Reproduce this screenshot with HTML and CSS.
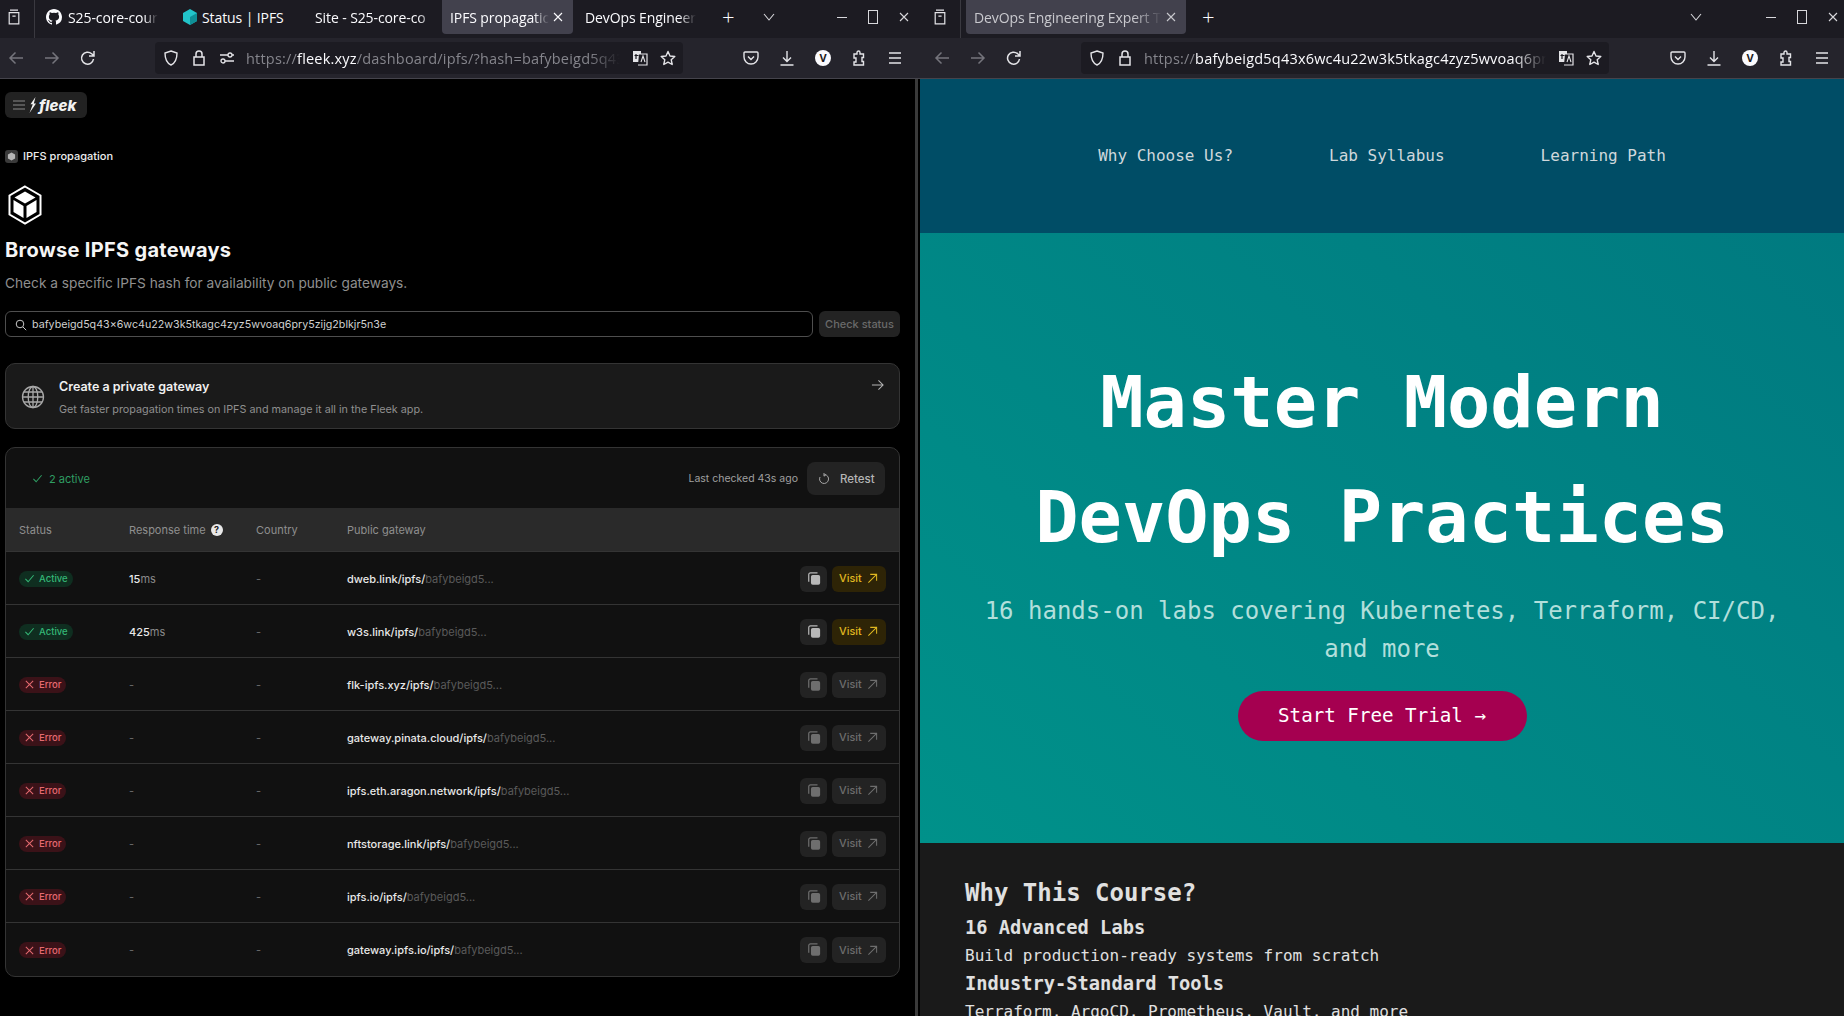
FILE: index.html
```html
<!DOCTYPE html>
<html lang="en">
<head>
    <meta charset="UTF-8">
    <title>IPFS propagation</title>
    <link rel="stylesheet" href="styles.css">
</head>
<body>
    <svg class="defs" width="0" height="0">
        <symbol id="i-tabs" viewBox="0 0 16 20"><path d="M3 1.500h10M2 4.500h12v14H2zM6 9h4" fill="none" stroke="currentColor" stroke-width="1.500"/></symbol>
        <symbol id="i-back" viewBox="0 0 16 16"><path d="M15 8H2M7.500 2.500L2 8l5.500 5.500" fill="none" stroke="currentColor" stroke-width="1.500"/></symbol>
        <symbol id="i-forward" viewBox="0 0 16 16"><path d="M1 8h13M8.500 2.500L14 8l-5.500 5.500" fill="none" stroke="currentColor" stroke-width="1.500"/></symbol>
        <symbol id="i-reload" viewBox="0 0 16 16"><path d="M13.500 9a6 6 0 1 1-1.800-5.200L14 6M14 1v5H9" fill="none" stroke="currentColor" stroke-width="1.500"/></symbol>
        <symbol id="i-shield" viewBox="0 0 16 16"><path d="M8 1l6 2c0 6-1.500 10-6 12C3.500 13 2 9 2 3z" fill="none" stroke="currentColor" stroke-width="1.400"/></symbol>
        <symbol id="i-lock" viewBox="0 0 16 16"><path d="M3 7h10v8H3zM5 7V4a3 3 0 0 1 6 0v3" fill="none" stroke="currentColor" stroke-width="1.500"/></symbol>
        <symbol id="i-perm" viewBox="0 0 16 16"><circle cx="4" cy="11" r="2" fill="none" stroke="currentColor" stroke-width="1.300"/><circle cx="11" cy="5" r="2" fill="none" stroke="currentColor" stroke-width="1.300"/><path d="M1 5h8M13 5h2M6 11h9" stroke="currentColor" stroke-width="1.300"/></symbol>
        <symbol id="i-translate" viewBox="0 0 16 16"><path d="M1 1h8v11H1z" fill="currentColor"/><path d="M7 4h8v11H6" fill="#1c1b22" stroke="currentColor" stroke-width="1.200"/><path d="M4 4v5M2.500 5.500h4" stroke="#1c1b22" stroke-width="1.200"/><path d="M9 12l2-6 2 6" fill="none" stroke="currentColor" stroke-width="1.100"/></symbol>
        <symbol id="i-star" viewBox="0 0 16 16"><path d="M8 1.500l2 4.500 4.800.500-3.600 3.200 1 4.800L8 12.100l-4.200 2.400 1-4.800L1.200 6.500 6 6z" fill="none" stroke="currentColor" stroke-width="1.400" stroke-linejoin="round"/></symbol>
        <symbol id="i-pocket" viewBox="0 0 16 16"><path d="M2 2h12a1 1 0 0 1 1 1v4a7 7 0 0 1-14 0V3a1 1 0 0 1 1-1z" fill="none" stroke="currentColor" stroke-width="1.400"/><path d="M5 6.500l3 3 3-3" fill="none" stroke="currentColor" stroke-width="1.400"/></symbol>
        <symbol id="i-download" viewBox="0 0 16 16"><path d="M8 1v10M4 7.500L8 11.500l4-4M1.500 15h13" fill="none" stroke="currentColor" stroke-width="1.400"/></symbol>
        <symbol id="i-ext" viewBox="0 0 16 16"><path d="M6 4V2.500a1.500 1.500 0 0 1 3 0V4h3.500v3.500H11v4h1.500V15H3v-3h2V8H3V4z" fill="none" stroke="currentColor" stroke-width="1.400"/></symbol>
        <symbol id="i-menu" viewBox="0 0 16 16"><path d="M2 3h12M2 8h12M2 13h12" stroke="currentColor" stroke-width="1.500"/></symbol>
        <symbol id="i-copy" viewBox="0 0 16 16"><path d="M2 11V3a2 2 0 0 1 2-2h8" fill="none" stroke="currentColor" stroke-width="1.400"/><rect x="4.500" y="3.500" width="10.500" height="11" rx="2" fill="currentColor"/></symbol>
        <symbol id="i-out" viewBox="0 0 12 12"><path d="M1.500 10.500l9-9M3.500 1.500h7v7" fill="none" stroke="currentColor" stroke-width="1.100"/></symbol>
        <symbol id="i-check" viewBox="0 0 12 12"><path d="M1.500 6.500l3 3 6-7" fill="none" stroke="currentColor" stroke-width="1.100"/></symbol>
        <symbol id="i-cross" viewBox="0 0 12 12"><path d="M2 2l8 8M10 2l-8 8" fill="none" stroke="currentColor" stroke-width="1.100"/></symbol>
    </svg>

    <!-- left window: fleek dashboard -->
    <div class="window window-left">
        <div class="tabbar">
            <svg class="ic tabs-btn"><use href="#i-tabs"/></svg>
            <div class="tab-sep"></div>
            <div class="tab tab-gh">
                <svg class="tab-icon" viewBox="0 0 16 16"><path fill="#fbfbfe" d="M8 0C3.600 0 0 3.600 0 8c0 3.500 2.300 6.500 5.500 7.600.4.100.5-.2.500-.4v-1.400c-2.200.5-2.700-1-2.700-1-.4-.9-.9-1.200-.9-1.200-.7-.5.100-.5.100-.5.800.100 1.200.8 1.200.8.700 1.200 1.900.9 2.300.7.100-.5.300-.9.500-1.100-1.800-.2-3.600-.9-3.600-4 0-.9.300-1.600.8-2.100-.1-.2-.4-1 .1-2.100 0 0 .7-.2 2.200.8a7.600 7.600 0 0 1 4 0c1.500-1 2.200-.8 2.200-.8.500 1.100.2 1.900.1 2.100.5.500.8 1.200.8 2.100 0 3.100-1.900 3.800-3.700 4 .3.300.6.800.6 1.500v2.200c0 .2.100.5.600.4A8 8 0 0 0 16 8c0-4.400-3.600-8-8-8z"/></svg>
                <span class="tab-text">S25-core-cour</span>
            </div>
            <div class="tab tab-status">
                <svg class="tab-icon" viewBox="0 0 16 16"><path fill="#22c4c9" d="M8 0l7 4v8l-7 4-7-4V4z"/><path fill="#0f8f96" d="M8 8l7-4v8l-7 4z"/></svg>
                <span class="tab-text tab-text-full">Status | IPFS</span>
            </div>
            <div class="tab tab-site"><span class="tab-text">Site - S25-core-co</span></div>
            <div class="tab tab-active tab-ipfs">
                <span class="tab-text">IPFS propagatic</span>
                <svg class="tab-close"><use href="#i-cross"/></svg>
            </div>
            <div class="tab tab-devops"><span class="tab-text">DevOps Engineer</span></div>
            <span class="tab-plus">+</span>
            <svg class="chevron" viewBox="0 0 12 8"><path d="M1 1l5 6 5-6" fill="none" stroke="currentColor" stroke-width="1.100"/></svg>
            <div class="win-controls">
                <span class="win-min"></span>
                <span class="win-max"></span>
                <svg class="win-close"><use href="#i-cross"/></svg>
            </div>
        </div>
        <div class="toolbar">
            <svg class="ic dim"><use href="#i-back"/></svg>
            <svg class="ic dim nav-gap"><use href="#i-forward"/></svg>
            <svg class="ic nav-gap"><use href="#i-reload"/></svg>
            <div class="urlbar">
                <svg class="ic"><use href="#i-shield"/></svg>
                <svg class="ic"><use href="#i-lock"/></svg>
                <svg class="ic"><use href="#i-perm"/></svg>
                <span class="url"><span class="url-dim">https://</span>fleek.xyz<span class="url-dim">/dashboard/ipfs/?hash=bafybeigd5q43</span></span>
                <svg class="ic"><use href="#i-translate"/></svg>
                <svg class="ic"><use href="#i-star"/></svg>
            </div>
            <div class="tool-right">
                <svg class="ic"><use href="#i-pocket"/></svg>
                <svg class="ic"><use href="#i-download"/></svg>
                <span class="avatar">V</span>
                <svg class="ic"><use href="#i-ext"/></svg>
                <svg class="ic"><use href="#i-menu"/></svg>
            </div>
        </div>
        <div class="fleek-page">
            <div class="fleek-content">
                <div class="logo-btn">
                    <svg class="logo-menu" viewBox="0 0 12 10"><path d="M0 1h12M0 5h12M0 9h12" stroke="#8a8a8a" stroke-width="1"/></svg>
                    <svg class="logo-bolt" viewBox="0 0 8 16"><path fill="#f2f2f2" d="M6.500 0L1.500 7.300h2.300L.5 16 7 6.500H4.800z"/></svg>
                    <span class="logo-text">fleek</span>
                </div>
                <div class="crumb">
                    <span class="crumb-icon"><svg viewBox="0 0 10 10"><path fill="#b5b5b5" d="M5 .5l4 2.200v4.600L5 9.500 1 7.300V2.700z"/></svg></span>
                    IPFS propagation
                </div>
                <svg class="cube" viewBox="0 0 36 40">
                    <path d="M18 1.500L33.500 10.500v19L18 38.500 2.500 29.500v-19z" fill="none" stroke="#fff" stroke-width="2"/>
                    <path d="M18 6.500L28.500 12.500 18 18.500 7.500 12.500z" fill="#fff"/>
                    <path d="M6.500 15l10 6v12l-10-6zM29.500 15l-10 6v12l10-6z" fill="#fff"/>
                </svg>
                <h1 class="page-title">Browse IPFS gateways</h1>
                <p class="page-sub">Check a specific IPFS hash for availability on public gateways.</p>
                <div class="search-row">
                    <div class="search-box">
                        <svg class="search-icon" viewBox="0 0 12 12"><circle cx="5" cy="5" r="3.800" fill="none" stroke="#c9c9c9" stroke-width="1"/><path d="M8 8l3.200 3.200" stroke="#c9c9c9" stroke-width="1"/></svg>
                        <span>bafybeigd5q43x6wc4u22w3k5tkagc4zyz5wvoaq6pry5zijg2blkjr5n3e</span>
                    </div>
                    <div class="check-btn">Check status</div>
                </div>
                <div class="promo">
                    <svg class="globe" viewBox="0 0 24 24" fill="none" stroke="#a8a8a8" stroke-width="1.300">
                        <circle cx="12" cy="12" r="10.500"/><ellipse cx="12" cy="12" rx="4.800" ry="10.500"/><path d="M12 1.500v21M1.500 12h21M3 7h18M3 17h18"/>
                    </svg>
                    <div class="promo-text">
                        <div class="promo-title">Create a private gateway</div>
                        <div class="promo-desc">Get faster propagation times on IPFS and manage it all in the Fleek app.</div>
                    </div>
                    <svg class="promo-arrow" viewBox="0 0 14 12"><path d="M1 6h12M8 1l5 5-5 5" fill="none" stroke="#b5b5b5" stroke-width="1.100"/></svg>
                </div>
                <div class="results">
                    <div class="results-top">
                        <div class="active-count"><svg class="ic-tiny"><use href="#i-check"/></svg>2 active</div>
                        <div class="last-checked">Last checked 43s ago</div>
                        <div class="retest-btn">
                            <svg class="retest-icon" viewBox="0 0 12 12"><path d="M6.500 1.500A4.500 4.500 0 1 1 2 4M6 0v3.200L8 1.500" fill="none" stroke="#a8a8a8" stroke-width="1"/></svg>
                            Retest
                        </div>
                    </div>
                    <div class="row row-head">
                        <span>Status</span>
                        <span class="resp-head">Response time <span class="help">?</span></span>
                        <span>Country</span>
                        <span>Public gateway</span>
                    </div>
                    <div class="row">
                        <span><span class="badge badge-ok"><svg class="ic-tiny"><use href="#i-check"/></svg>Active</span></span>
                        <span class="time"><b>15</b>ms</span>
                        <span class="dash">-</span>
                        <span class="gw"><b>dweb.link/ipfs/</b>bafybeigd5...</span>
                        <div class="actions"><span class="copy-btn"><svg><use href="#i-copy"/></svg></span><span class="visit-btn visit-on">Visit <svg><use href="#i-out"/></svg></span></div>
                    </div>
                    <div class="row">
                        <span><span class="badge badge-ok"><svg class="ic-tiny"><use href="#i-check"/></svg>Active</span></span>
                        <span class="time"><b>425</b>ms</span>
                        <span class="dash">-</span>
                        <span class="gw"><b>w3s.link/ipfs/</b>bafybeigd5...</span>
                        <div class="actions"><span class="copy-btn"><svg><use href="#i-copy"/></svg></span><span class="visit-btn visit-on">Visit <svg><use href="#i-out"/></svg></span></div>
                    </div>
                    <div class="row">
                        <span><span class="badge badge-err"><svg class="ic-tiny"><use href="#i-cross"/></svg>Error</span></span>
                        <span class="dash">-</span>
                        <span class="dash">-</span>
                        <span class="gw"><b>flk-ipfs.xyz/ipfs/</b>bafybeigd5...</span>
                        <div class="actions off"><span class="copy-btn"><svg><use href="#i-copy"/></svg></span><span class="visit-btn">Visit <svg><use href="#i-out"/></svg></span></div>
                    </div>
                    <div class="row">
                        <span><span class="badge badge-err"><svg class="ic-tiny"><use href="#i-cross"/></svg>Error</span></span>
                        <span class="dash">-</span>
                        <span class="dash">-</span>
                        <span class="gw"><b>gateway.pinata.cloud/ipfs/</b>bafybeigd5...</span>
                        <div class="actions off"><span class="copy-btn"><svg><use href="#i-copy"/></svg></span><span class="visit-btn">Visit <svg><use href="#i-out"/></svg></span></div>
                    </div>
                    <div class="row">
                        <span><span class="badge badge-err"><svg class="ic-tiny"><use href="#i-cross"/></svg>Error</span></span>
                        <span class="dash">-</span>
                        <span class="dash">-</span>
                        <span class="gw"><b>ipfs.eth.aragon.network/ipfs/</b>bafybeigd5...</span>
                        <div class="actions off"><span class="copy-btn"><svg><use href="#i-copy"/></svg></span><span class="visit-btn">Visit <svg><use href="#i-out"/></svg></span></div>
                    </div>
                    <div class="row">
                        <span><span class="badge badge-err"><svg class="ic-tiny"><use href="#i-cross"/></svg>Error</span></span>
                        <span class="dash">-</span>
                        <span class="dash">-</span>
                        <span class="gw"><b>nftstorage.link/ipfs/</b>bafybeigd5...</span>
                        <div class="actions off"><span class="copy-btn"><svg><use href="#i-copy"/></svg></span><span class="visit-btn">Visit <svg><use href="#i-out"/></svg></span></div>
                    </div>
                    <div class="row">
                        <span><span class="badge badge-err"><svg class="ic-tiny"><use href="#i-cross"/></svg>Error</span></span>
                        <span class="dash">-</span>
                        <span class="dash">-</span>
                        <span class="gw"><b>ipfs.io/ipfs/</b>bafybeigd5...</span>
                        <div class="actions off"><span class="copy-btn"><svg><use href="#i-copy"/></svg></span><span class="visit-btn">Visit <svg><use href="#i-out"/></svg></span></div>
                    </div>
                    <div class="row row-last">
                        <span><span class="badge badge-err"><svg class="ic-tiny"><use href="#i-cross"/></svg>Error</span></span>
                        <span class="dash">-</span>
                        <span class="dash">-</span>
                        <span class="gw"><b>gateway.ipfs.io/ipfs/</b>bafybeigd5...</span>
                        <div class="actions off"><span class="copy-btn"><svg><use href="#i-copy"/></svg></span><span class="visit-btn">Visit <svg><use href="#i-out"/></svg></span></div>
                    </div>
                </div>
            </div>
            <div class="scrollbar"></div>
        </div>
    </div>

    <!-- right window: course site -->
    <div class="window window-right">
        <div class="tabbar">
            <svg class="ic tabs-btn"><use href="#i-tabs"/></svg>
            <div class="tab-sep"></div>
            <div class="tab tab-active tab-course">
                <span class="tab-text">DevOps Engineering Expert T</span>
                <svg class="tab-close"><use href="#i-cross"/></svg>
            </div>
            <span class="tab-plus">+</span>
            <svg class="chevron" viewBox="0 0 12 8"><path d="M1 1l5 6 5-6" fill="none" stroke="currentColor" stroke-width="1.100"/></svg>
            <div class="win-controls">
                <span class="win-min"></span>
                <span class="win-max"></span>
                <svg class="win-close"><use href="#i-cross"/></svg>
            </div>
        </div>
        <div class="toolbar">
            <svg class="ic dim"><use href="#i-back"/></svg>
            <svg class="ic dim nav-gap"><use href="#i-forward"/></svg>
            <svg class="ic nav-gap"><use href="#i-reload"/></svg>
            <div class="urlbar">
                <svg class="ic"><use href="#i-shield"/></svg>
                <svg class="ic"><use href="#i-lock"/></svg>
                <span class="url"><span class="url-dim">https://</span>bafybeigd5q43x6wc4u22w3k5tkagc4zyz5wvoaq6pr</span>
                <svg class="ic"><use href="#i-translate"/></svg>
                <svg class="ic"><use href="#i-star"/></svg>
            </div>
            <div class="tool-right">
                <svg class="ic"><use href="#i-pocket"/></svg>
                <svg class="ic"><use href="#i-download"/></svg>
                <span class="avatar">V</span>
                <svg class="ic"><use href="#i-ext"/></svg>
                <svg class="ic"><use href="#i-menu"/></svg>
            </div>
        </div>
        <div class="course-page">
            <nav class="course-nav">
                <a>Why Choose Us?</a>
                <a>Lab Syllabus</a>
                <a>Learning Path</a>
            </nav>
            <section class="hero">
                <h1>Master Modern DevOps Practices</h1>
                <p>16 hands-on labs covering Kubernetes, Terraform, CI/CD, and more</p>
                <a class="cta">Start Free Trial →</a>
            </section>
            <section class="why">
                <h2>Why This Course?</h2>
                <h3>16 Advanced Labs</h3>
                <p>Build production-ready systems from scratch</p>
                <h3>Industry-Standard Tools</h3>
                <p>Terraform, ArgoCD, Prometheus, Vault, and more</p>
            </section>
        </div>
    </div>
</body>
</html>
```

FILE: styles.css
```css
* {
    margin: 0;
    padding: 0;
    box-sizing: border-box;
}

html, body {
    height: 100%;
    overflow: hidden;
}

body {
    display: flex;
    background: #000;
    font-family: 'Open Sans', sans-serif;
}

.defs {
    position: absolute;
}

.window {
    height: 1016px;
    display: flex;
    flex-direction: column;
    overflow: hidden;
}

.window-left {
    width: 920px;
}

.window-right {
    width: 924px;
}

/* browser chrome */
.tabbar {
    height: 38px;
    flex: none;
    background: #1c1b22;
    display: flex;
    align-items: flex-start;
    color: #fbfbfe;
    font-size: 14px;
}

.tabs-btn {
    margin: 9px 0 0 6px;
    flex: none;
}

.window-right .tabs-btn {
    margin-left: 12px;
}

.ic {
    width: 16px;
    height: 16px;
    flex: none;
    color: #e4e4e8;
}

.ic.dim {
    color: #75747c;
}

.tab-sep {
    width: 1px;
    height: 38px;
    background: #3a3940;
    margin-left: 12px;
    flex: none;
}

.tab {
    height: 34px;
    display: flex;
    align-items: center;
    flex: none;
    border-radius: 0 0 4px 4px;
    white-space: nowrap;
}

.tab-text {
    letter-spacing: -0.1px;
    flex: 1;
    -webkit-mask-image: linear-gradient(to right, #000 85%, transparent);
    mask-image: linear-gradient(to right, #000 85%, transparent);
}

.tab-text-full {
    -webkit-mask-image: none;
    mask-image: none;
}

.tab-icon {
    width: 16px;
    height: 16px;
    margin-right: 6px;
    flex: none;
}

.tab-gh {
    width: 123px;
    padding-left: 11px;
    padding-right: 6px;
}

.tab-status {
    width: 143px;
    padding-left: 28px;
    padding-right: 8px;
}

.tab-status .tab-icon {
    margin-right: 4px;
    margin-left: -4px;
}

.tab-site {
    width: 139px;
    padding-left: 14px;
    padding-right: 4px;
}

.tab-active {
    background: #42414d;
    position: relative;
    padding-left: 8px;
    padding-right: 24px;
}

.tab-ipfs {
    width: 131px;
    margin-left: 2px;
}

.tab-close {
    position: absolute;
    right: 9px;
    top: 11px;
    width: 12px;
    height: 12px;
}

.tab-devops {
    width: 123px;
    padding-left: 12px;
}

.tab-course {
    width: 220px;
    margin-left: 5px;
    color: #c9c9ce;
}

.tab-plus {
    font-size: 22px;
    font-weight: 300;
    line-height: 32px;
    flex: none;
    margin-left: 26px;
}

.tab-course + .tab-plus {
    margin-left: 16px;
}

.chevron {
    width: 12px;
    height: 8px;
    margin: 13px 0 0 28px;
    flex: none;
    color: #d8d8dc;
}

.window-right .chevron {
    margin-left: 475px;
}

.win-controls {
    display: flex;
    align-items: center;
    margin: 10px 0 0 62px;
    gap: 20px;
}

.window-right .win-controls {
    margin-left: 64px;
}

.win-min {
    width: 10px;
    height: 1px;
    background: #d8d8dc;
}

.win-max {
    width: 10px;
    height: 14px;
    border: 1px solid #d8d8dc;
    margin-left: 1px;
}

.win-close {
    width: 12px;
    height: 12px;
    color: #d8d8dc;
}

.toolbar {
    height: 41px;
    flex: none;
    background: #25242c;
    border-bottom: 1px solid #45444c;
    display: flex;
    align-items: center;
    padding-left: 8px;
}

.window-right .toolbar {
    padding-left: 14px;
}

.nav-gap {
    margin-left: 20px;
}

.urlbar {
    width: 528px;
    height: 32px;
    margin-left: 59px;
    background: #1c1b22;
    border-radius: 4px;
    display: flex;
    align-items: center;
    gap: 12px;
    padding: 0 7px 0 8px;
    flex: none;
}

.url {
    flex: 1;
    min-width: 0;
    white-space: nowrap;
    font-size: 14.5px;
    letter-spacing: 0.2px;
    color: #fbfbfe;
    margin-left: -1px;
    -webkit-mask-image: linear-gradient(to right, #000 92%, transparent);
    mask-image: linear-gradient(to right, #000 92%, transparent);
}

.url-dim {
    color: #85858c;
}

.tool-right {
    display: flex;
    align-items: center;
    gap: 20px;
    margin-left: 60px;
}

.window-right .tool-right {
    margin-left: 61px;
}

.avatar {
    width: 16px;
    height: 16px;
    border-radius: 50%;
    background: #fbfbfe;
    color: #1c1b22;
    font-size: 11px;
    font-weight: 700;
    text-align: center;
    line-height: 16px;
    flex: none;
}

/* fleek dashboard */
.fleek-page {
    flex: 1;
    display: flex;
    background: #000;
    min-height: 0;
}

.fleek-content {
    width: 915px;
    padding: 13px 15px 0 5px;
    font-family: 'Inter', sans-serif;
}

.scrollbar {
    width: 3px;
    background: #3a3a3a;
}

.logo-btn {
    width: 82px;
    height: 26px;
    background: #222;
    border-radius: 6px;
    display: flex;
    align-items: center;
    padding-left: 8px;
}

.logo-menu {
    width: 12px;
    height: 10px;
    margin-right: 4px;
}

.logo-bolt {
    width: 8px;
    height: 16px;
    margin-right: 2px;
}

.logo-text {
    font-size: 15px;
    font-weight: 800;
    font-style: italic;
    color: #f2f2f2;
}

.crumb {
    display: flex;
    align-items: center;
    gap: 5px;
    margin-top: 30px;
    height: 16px;
    font-size: 11px;
    font-weight: 500;
    color: #ededed;
}

.crumb-icon {
    width: 13px;
    height: 13px;
    background: #3a3a3a;
    border-radius: 3px;
    display: flex;
    align-items: center;
    justify-content: center;
}

.crumb-icon svg {
    width: 9px;
    height: 9px;
}

.cube {
    display: block;
    width: 36px;
    height: 40px;
    margin: 21px 0 0 2px;
}

.page-title {
    font-size: 20px;
    font-weight: 700;
    letter-spacing: 0.3px;
    color: #f5f5f5;
    line-height: 28px;
    margin-top: 11px;
}

.page-sub {
    font-size: 13.700px;
    color: #8f8f8f;
    line-height: 20px;
    margin-top: 9px;
}

.search-row {
    display: flex;
    gap: 6px;
    margin-top: 18px;
}

.search-box {
    flex: 1;
    height: 26px;
    border: 1px solid #4e4e4e;
    border-radius: 6px;
    display: flex;
    align-items: center;
    gap: 5px;
    padding: 1px 0 0 9px;
    font-size: 10.700px;
    color: #cfcfcf;
}

.search-icon {
    width: 12px;
    height: 12px;
}

.check-btn {
    width: 81px;
    height: 26px;
    background: #232323;
    border-radius: 6px;
    color: #6a6a6a;
    font-size: 11px;
    font-weight: 500;
    line-height: 27px;
    text-align: center;
}

.promo {
    height: 66px;
    margin-top: 26px;
    background: #1a1a1a;
    border: 1px solid #343434;
    border-radius: 10px;
    display: flex;
    align-items: flex-start;
    padding: 0 15px;
}

.globe {
    width: 24px;
    height: 24px;
    margin: 21px 14px 0 0;
    flex: none;
}

.promo-text {
    flex: 1;
    padding-top: 15px;
}

.promo-title {
    font-size: 12.500px;
    font-weight: 600;
    color: #f0f0f0;
    line-height: 16px;
}

.promo-desc {
    font-size: 10.800px;
    color: #8f8f8f;
    line-height: 16px;
    margin-top: 7px;
}

.promo-arrow {
    width: 13px;
    height: 12px;
    margin-top: 15px;
    flex: none;
}

.results {
    margin-top: 18px;
    background: #111;
    border: 1px solid #343434;
    border-radius: 10px;
    overflow: hidden;
}

.results-top {
    height: 60px;
    display: flex;
    align-items: center;
    padding: 0 14px 0 26px;
}

.active-count {
    flex: 1;
    display: flex;
    align-items: center;
    gap: 6px;
    padding-top: 1px;
    font-size: 11px;
    color: #2f9e63;
}

.ic-tiny {
    width: 11px;
    height: 11px;
    flex: none;
}

.last-checked {
    font-size: 10.500px;
    color: #a0a0a0;
    margin-right: 9px;
    padding-top: 1px;
}

.retest-btn {
    width: 78px;
    height: 33px;
    background: #232323;
    border-radius: 8px;
    display: flex;
    align-items: center;
    gap: 10px;
    padding: 1px 0 0 11px;
    font-size: 11.500px;
    font-weight: 500;
    color: #b5b5b5;
}

.retest-icon {
    width: 12px;
    height: 12px;
}

.row {
    display: grid;
    grid-template-columns: 110px 127px 91px 1fr auto;
    align-items: center;
    height: 53px;
    padding: 1px 13px 0;
    border-bottom: 1px solid #343434;
    font-size: 11px;
    color: #8a8a8a;
}

.row-last {
    border-bottom: none;
}

.row-head {
    height: 44px;
    background: #2a2a2a;
    grid-template-columns: 110px 127px 91px 1fr;
    color: #8f8f8f;
    font-size: 11px;
}

.resp-head {
    display: flex;
    align-items: center;
    gap: 5px;
}

.help {
    width: 12px;
    height: 12px;
    border-radius: 50%;
    background: #e8e8e8;
    color: #222;
    font-size: 9px;
    font-weight: 700;
    text-align: center;
    line-height: 12px;
}

.badge {
    display: inline-flex;
    align-items: center;
    gap: 4px;
    height: 16px;
    padding: 0 5px;
    border-radius: 8px;
    font-size: 9.500px;
    font-weight: 500;
    vertical-align: middle;
}

.badge-ok {
    background: #0f2e20;
    color: #35b877;
}

.badge-err {
    background: #3b1218;
    color: #e56a70;
}

.time b, .gw b {
    font-weight: 500;
    color: #e8e8e8;
}

.dash {
    color: #6a6a6a;
}

.gw {
    color: #5a5a5a;
}

.actions {
    display: flex;
    gap: 5px;
}

.copy-btn {
    width: 27px;
    height: 26px;
    background: #232323;
    border-radius: 6px;
    display: flex;
    align-items: center;
    justify-content: center;
    color: #b8b8b8;
}

.copy-btn svg {
    width: 14px;
    height: 14px;
}

.visit-btn {
    width: 54px;
    height: 26px;
    border-radius: 6px;
    background: #232323;
    color: #6e6e6e;
    display: flex;
    align-items: center;
    gap: 5px;
    padding-left: 7px;
    font-size: 10.800px;
    font-weight: 500;
}

.visit-btn svg {
    width: 11px;
    height: 11px;
}

.visit-on {
    background: #2e2406;
    color: #e0b820;
}

.actions.off .copy-btn {
    color: #6e6e6e;
}

/* course site */
.course-page {
    flex: 1;
    min-height: 0;
    font-family: 'DejaVu Sans Mono', monospace;
    line-height: 1.6;
    background: #1a1a1a;
    overflow: hidden;
}

.course-nav {
    height: 154px;
    display: flex;
    justify-content: center;
    align-items: center;
    gap: 96px;
    background: #004d66;
    font-size: 16px;
    color: #cfd8dc;
}

.hero {
    height: 610px;
    background: linear-gradient(40deg, #00918a, #007a80);
    color: #fff;
    text-align: center;
    padding: 112px 48px 0;
}

.hero h1 {
    font-size: 72px;
    font-weight: 700;
    line-height: 115px;
    width: 700px;
    margin: 0 auto;
}

.hero p {
    font-size: 24px;
    color: #b2dfdb;
    margin-top: 17px;
}

.cta {
    display: inline-block;
    margin-top: 22px;
    width: 289px;
    height: 50px;
    line-height: 50px;
    border-radius: 25px;
    background: #a50050;
    font-size: 19.200px;
}

.why {
    padding: 31px 45px;
    color: #e0e0e0;
}

.why h2 {
    font-size: 24px;
    line-height: 39px;
}

.why h3 {
    font-size: 18.720px;
    line-height: 30px;
}

.why p {
    font-size: 16px;
    line-height: 26px;
}
```
